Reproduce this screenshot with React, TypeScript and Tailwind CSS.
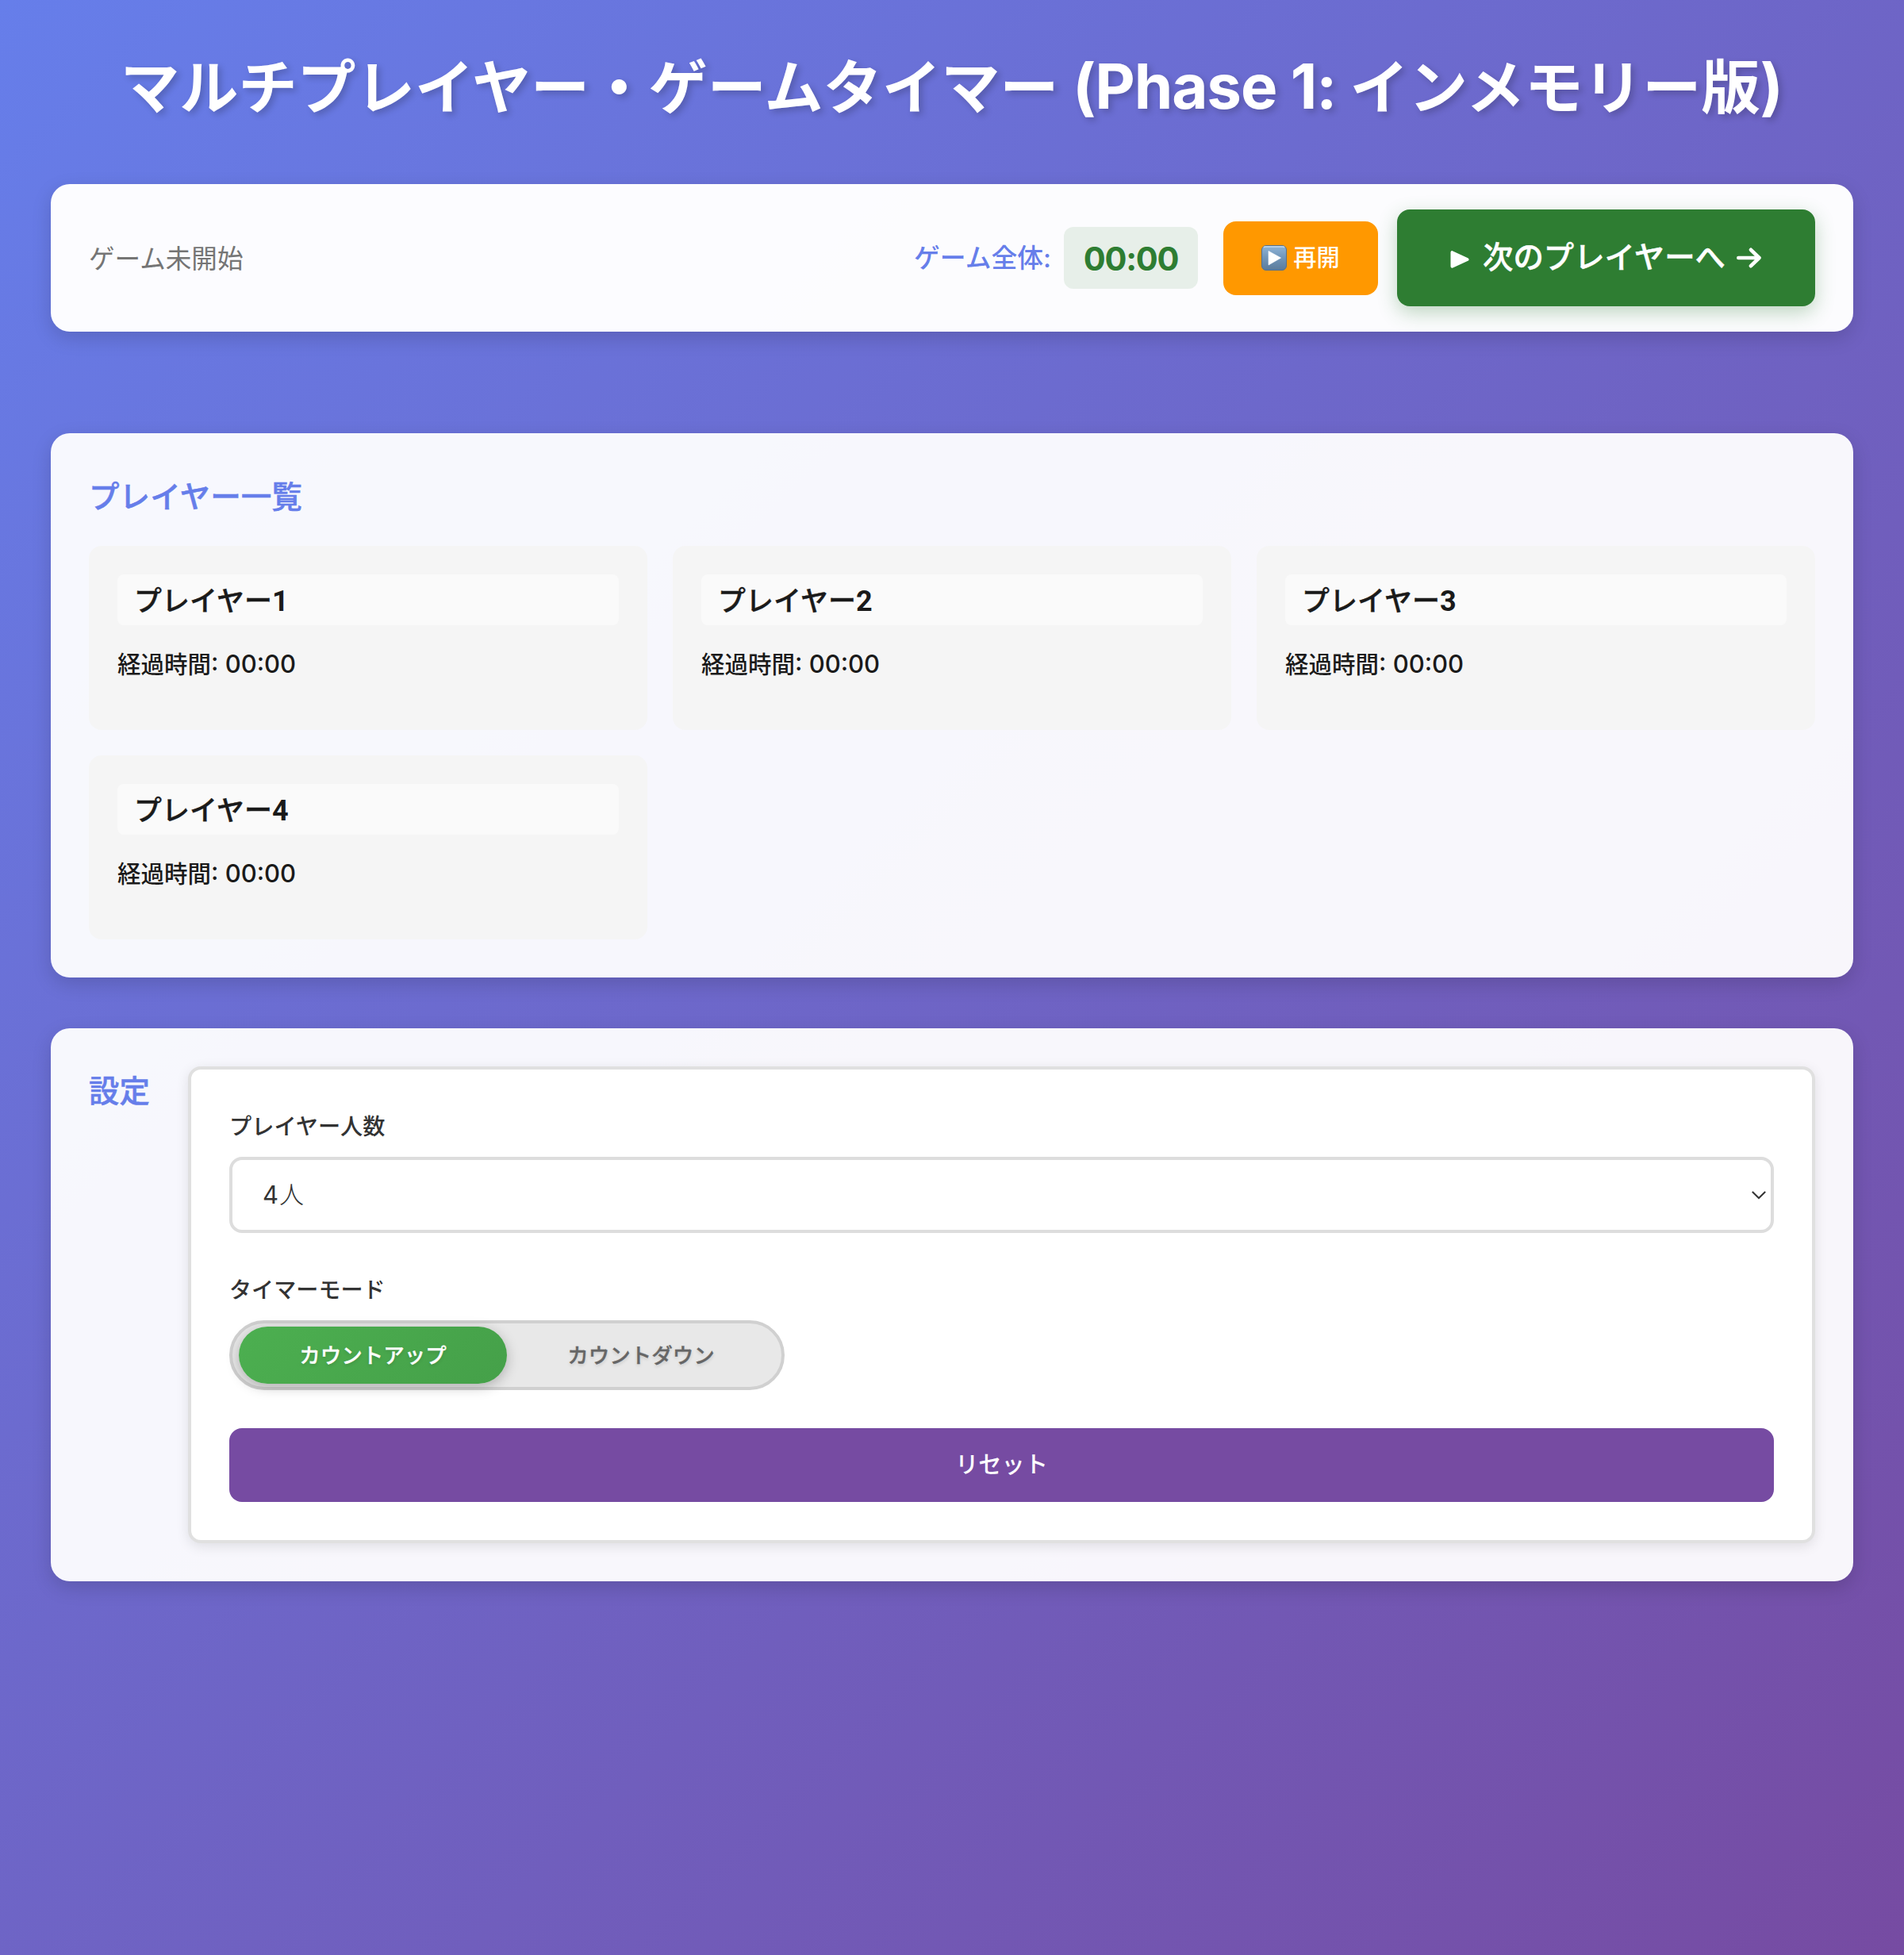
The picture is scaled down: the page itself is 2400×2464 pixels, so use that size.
import React from "react";

const players = [1, 2, 3, 4];

function PlayGlyph() {
  return (
    <svg className="h-8 w-8 shrink-0" viewBox="0 0 32 32" aria-hidden="true">
      <defs>
        <linearGradient id="tile" x1="0" y1="0" x2="0" y2="1">
          <stop offset="0" stopColor="#8fb4d8" />
          <stop offset="0.5" stopColor="#7095b8" />
          <stop offset="1" stopColor="#5b7b9b" />
        </linearGradient>
      </defs>
      <rect x="0.5" y="0.5" width="31" height="31" rx="5.5" fill="url(#tile)" stroke="#54718f" />
      <path d="M3 3 Q3.5 2 5 2 H27 Q28.5 2 29 3" fill="none" stroke="#c3d8ec" strokeWidth="1.4" />
      <path d="M9 7.4 L24.6 16 L9 25 Z" fill="#fff" stroke="#fff" strokeWidth="0.6" strokeLinejoin="round" />
    </svg>
  );
}

function PlayerCard({ number }: { number: number }) {
  return (
    <div className="h-[232px] rounded-2xl border-4 border-transparent bg-[#f5f5f5] p-8">
      <h3 className="flex h-16 items-center rounded-lg bg-white/50 pl-[21px] pr-5 pt-[3px] text-[35px] font-medium leading-none [-webkit-text-stroke:0.4px]">
        プレイヤー<span className="font-['Roboto'] text-[36px] font-bold [-webkit-text-stroke:0]">{number}</span>
      </h3>
      <p className="mt-6 whitespace-pre text-[29.5px] font-medium leading-[50px]">
        経過時間<span className="text-[31px]">: 00:00</span>
      </p>
    </div>
  );
}

export default function App() {
  return (
    <div
      lang="ja"
      className="h-[2464px] w-[2400px] bg-[linear-gradient(135deg,#667eea_0%,#764ba2_100%)] px-16 pt-16 font-['Inter','Noto_Sans_CJK_JP',sans-serif] text-[#1a1a1a]"
    >
      <h1 className="-mt-0.5 h-[170px] whitespace-pre text-center text-[74.2px] font-bold leading-[96px] text-white [text-shadow:4px_4px_8px_rgba(0,0,0,0.2)]">
        マルチプレイヤー・ゲームタイマー
        <span className="text-[78px] leading-none tracking-[-1.1px]"> (Phase 1: </span>
        インメモリー版<span className="text-[78px] leading-none">)</span>
      </h1>

      <header className="flex h-[186px] items-center rounded-3xl bg-white/98 px-12 shadow-[0_8px_24px_rgba(0,0,0,0.15)]">
        <span className="pt-0.5 text-[32.6px] text-[#757575]">ゲーム未開始</span>
        <span className="ml-auto pt-0.5 text-[32.8px] font-medium text-[#667eea]">ゲーム全体:</span>
        <span className="ml-4 flex h-[78px] w-[169px] items-center justify-center rounded-xl bg-[#2e7d32]/10 pt-0.5 text-[41.4px] font-bold tracking-[-1.2px] text-[#2e7d32]">
          00:00
        </span>
        <button className="ml-8 flex h-[93px] w-[195px] items-center justify-center gap-2 rounded-2xl bg-[#ff9800] text-[29.2px] font-medium text-white">
          <PlayGlyph />
          再開
        </button>
        <button className="ml-6 flex h-[122px] w-[527px] items-center rounded-2xl bg-[#2e7d32] pl-[67px] text-[38.4px] font-medium text-white shadow-[0_8px_24px_rgba(46,125,50,0.3)] [-webkit-text-stroke:0.5px]">
          <svg className="mt-1 mr-[17px] h-[22px] w-6" viewBox="0 0 24 22" fill="#fff" stroke="#fff" strokeWidth="4" strokeLinejoin="round" aria-hidden="true">
            <path d="M2.5 2.2 V19.8 L21.5 11 Z" />
          </svg>
          次のプレイヤーへ
          <svg className="ml-[14px] h-[26px] w-[31px]" viewBox="0 0 31 26" fill="none" stroke="#fff" strokeWidth="4.6" strokeLinecap="round" strokeLinejoin="round" aria-hidden="true">
            <path d="M2.3 13 H28 M18 2.8 L28.5 13 L18 23.2" />
          </svg>
        </button>
      </header>

      <section className="mt-32 h-[686px] rounded-3xl bg-white/95 p-12 shadow-[0_8px_24px_rgba(0,0,0,0.15)]">
        <h2 className="h-[94px] text-[38.6px] font-medium leading-[64px] text-[#667eea] [-webkit-text-stroke:0.5px]">プレイヤー一覧</h2>
        <div className="grid grid-cols-3 gap-8">
          {players.map((number) => (
            <PlayerCard key={number} number={number} />
          ))}
        </div>
      </section>

      <section className="mt-16 flex h-[697px] items-start rounded-3xl bg-white/95 p-12 shadow-[0_8px_24px_rgba(0,0,0,0.15)]">
        <h2 className="w-[125px] text-[38.4px] font-medium leading-[63px] text-[#667eea] [-webkit-text-stroke:0.5px]">設定</h2>
        <div className="h-[601px] flex-1 rounded-2xl border-4 border-[#e0e0e0] bg-white p-12 shadow-[0_4px_16px_rgba(0,0,0,0.1)]">
          <div className="h-[62px] text-[28.2px] font-medium leading-[49px] text-[#333]">プレイヤー人数</div>
          <div className="flex h-24 items-center justify-between rounded-2xl border-4 border-[#ddd] bg-white pl-[38px] pr-[5px] text-[31px] text-[#333]">
            <span>
              4<span className="ml-px font-light">人</span>
            </span>
            <svg className="h-5 w-5" viewBox="0 0 20 20" fill="none" stroke="#333" strokeWidth="2" aria-hidden="true">
              <path d="M1.8 6 L10 14 L18.2 6" />
            </svg>
          </div>
          <div className="mt-12 h-[62px] text-[28.1px] font-medium leading-[49px] text-[#333]">タイマーモード</div>
          <div className="flex h-[88px] w-[700px] items-center rounded-full border-4 border-[#d0d0d0] bg-[#e8e8e8] px-2 text-[26.5px] font-medium [-webkit-text-stroke:0.3px] [text-shadow:0_2px_4px_rgba(0,0,0,0.15)]">
            <div className="flex h-[72px] w-[338px] items-center justify-center rounded-full bg-[linear-gradient(135deg,#4caf50,#45a049)] pt-px text-white shadow-[0_4px_16px_rgba(0,0,0,0.25)]">
              カウントアップ
            </div>
            <div className="flex h-[72px] w-[338px] items-center justify-center pt-px text-[#666]">カウントダウン</div>
          </div>
          <button className="mt-12 h-[93px] w-full rounded-2xl bg-[#764ba2] pb-px text-[29.2px] font-medium text-white">
            リセット
          </button>
        </div>
      </section>
    </div>
  );
}
